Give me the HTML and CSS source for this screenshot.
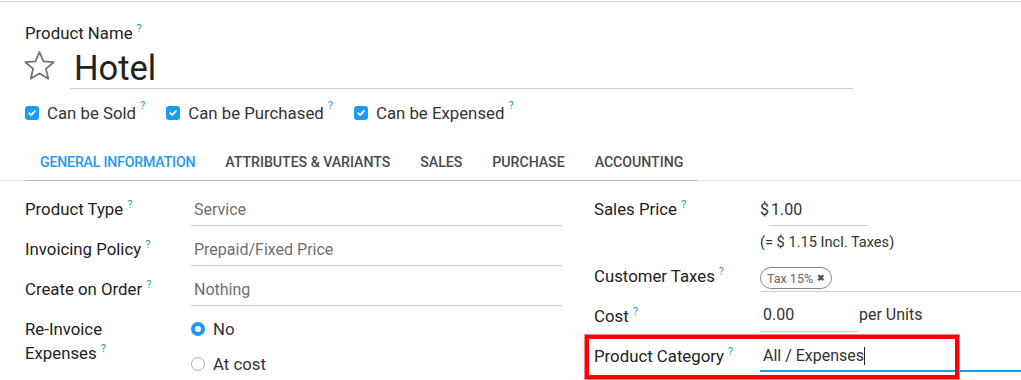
FILE: index.html
```html
<!DOCTYPE html>
<html>
<head>
<meta charset="utf-8">
<link rel="stylesheet" href="styles.css">
</head>
<body>
<div class="topline"></div>
<div class="sheet">
  <div class="title">
    <div class="name-label">Product Name<sup class="tip">?</sup></div>
    <div class="name-row">
      <svg class="star" width="33" height="31" viewBox="0 0 33 31">
        <path d="M16.5 2 L20.5 11.4 L30.6 12.2 L22.9 18.9 L25.3 28.8 L16.5 23.5 L7.7 28.8 L10.1 18.9 L2.4 12.2 L12.5 11.4 Z" fill="none" stroke="#737373" stroke-width="1.8" stroke-linejoin="round"/>
      </svg>
      <div class="name-input">Hotel</div>
    </div>
    <div class="checks">
      <label class="check"><span class="box"><svg width="10" height="10" viewBox="0 0 10 10"><path d="M2.2 5.2 L4.2 7.1 L7.9 3" fill="none" stroke="#fff" stroke-width="1.8" stroke-linecap="round" stroke-linejoin="round"/></svg></span>Can be Sold<sup class="tip">?</sup></label>
      <label class="check"><span class="box"><svg width="10" height="10" viewBox="0 0 10 10"><path d="M2.2 5.2 L4.2 7.1 L7.9 3" fill="none" stroke="#fff" stroke-width="1.8" stroke-linecap="round" stroke-linejoin="round"/></svg></span>Can be Purchased<sup class="tip">?</sup></label>
      <label class="check"><span class="box"><svg width="10" height="10" viewBox="0 0 10 10"><path d="M2.2 5.2 L4.2 7.1 L7.9 3" fill="none" stroke="#fff" stroke-width="1.8" stroke-linecap="round" stroke-linejoin="round"/></svg></span>Can be Expensed<sup class="tip">?</sup></label>
    </div>
  </div>

  <div class="tabs-wrap">
    <ul class="tabs">
      <li class="tab active">General Information</li>
      <li class="tab">Attributes &amp; Variants</li>
      <li class="tab">Sales</li>
      <li class="tab">Purchase</li>
      <li class="tab">Accounting</li>
    </ul>
  </div>

  <div class="groups">
    <div class="group">
      <div class="row">
        <div class="label">Product Type<sup class="tip">?</sup></div>
        <div class="field select">Service</div>
      </div>
      <div class="row">
        <div class="label">Invoicing Policy<sup class="tip">?</sup></div>
        <div class="field select">Prepaid/Fixed Price</div>
      </div>
      <div class="row">
        <div class="label">Create on Order<sup class="tip">?</sup></div>
        <div class="field select">Nothing</div>
      </div>
      <div class="row tall">
        <div class="label two-line">Re-Invoice<br>Expenses<sup class="tip">?</sup></div>
        <div class="radios">
          <div class="radio-item"><span class="radio on"></span>No</div>
          <div class="radio-item"><span class="radio"></span>At cost</div>
        </div>
      </div>
    </div>

    <div class="group right">
      <div class="row price-row">
        <div class="label">Sales Price<sup class="tip">?</sup></div>
        <div class="price-field">
          <div class="price-line"><span class="cur">$</span><span class="field money">1.00</span></div>
          <div class="incl">(= $ 1.15 Incl. Taxes)</div>
        </div>
      </div>
      <div class="row taxes-row">
        <div class="label">Customer Taxes<sup class="tip">?</sup></div>
        <div class="tags-field"><span class="tag">Tax 15% <span class="x">&#10006;</span></span></div>
      </div>
      <div class="row cost-row">
        <div class="label">Cost<sup class="tip">?</sup></div>
        <div class="cost-line"><span class="field cost">0.00</span><span class="unit">per Units</span></div>
      </div>
      <div class="row cat-row">
        <div class="label">Product Category<sup class="tip">?</sup></div>
        <div class="field focused">All / Expenses<span class="caret"></span></div>
      </div>
    </div>
  </div>
</div>
<div class="highlight"></div>
</body>
</html>
```

FILE: styles.css
```css
html, body {
  margin: 0;
  padding: 0;
  overflow: hidden;
  background: #fff;
}
body {
  font-family: Roboto, "Noto Sans", sans-serif;
  color: #2b2b2b;
  font-size: 16.8px;
  width: 1021px;
  height: 380px;
  position: relative;
}
.topline {
  height: 1px;
  border-bottom: 1px solid #e0e0e0;
}
.tip {
  color: #1f9bd7;
  font-size: 11px;
  margin-left: 4px;
  vertical-align: 0;
  position: relative;
  top: -7px;
  line-height: 0;
}
.title {
  padding-left: 25px;
}
.name-label {
  margin-top: 21px;
  line-height: 20px;
  color: #222;
}
.name-row {
  display: flex;
  align-items: flex-start;
  margin-top: 5px;
}
.star {
  margin-left: -2px;
  margin-top: 2px;
  flex: none;
}
.name-input {
  margin-left: 14px;
  width: 779px;
  padding-left: 4px;
  height: 40px;
  line-height: 40px;
  font-size: 34.5px;
  color: #222;
  border-bottom: 1px solid #cfcfcf;
}
.checks {
  display: flex;
  margin-top: 14px;
  line-height: 20px;
  color: #333;
}
.check {
  display: flex;
  align-items: center;
  margin-right: 21px;
}
.box {
  width: 14px;
  height: 14px;
  border-radius: 3px;
  background: #1a9cf0;
  display: inline-flex;
  align-items: center;
  justify-content: center;
  margin-right: 8px;
}
.box svg { display: block; }

.tabs-wrap {
  margin-top: 21px;
  padding-left: 25px;
  border-bottom: 1px solid #e4e4e4;
}
.tabs {
  list-style: none;
  margin: 0 0 -1px 0;
  padding: 0;
  display: inline-flex;
  border-bottom: 1px solid #b8b8b8;
}
.tab {
  padding: 8px 15px 8px 15px;
  line-height: 20px;
  font-size: 14.2px;
  font-weight: 500;
  letter-spacing: -0.05px;
  text-transform: uppercase;
  color: #4a4a4a;
}
.tab.active {
  color: #1f9bf0;
  letter-spacing: -0.22px;
}

.groups {
  display: flex;
  margin-top: 8px;
  padding-left: 25px;
  gap: 32px;
}
.group {
  width: 537px;
  flex: none;
  display: flex;
  flex-direction: column;
}
.row {
  display: grid;
  grid-template-columns: 166px 1fr;
  height: 40px;
}
.row.tall { height: 80px; }
.label {
  padding-top: 10px;
  line-height: 20px;
  color: #222;
}
.label.two-line {
  padding-top: 8px;
  line-height: 24px;
}
.field {
  padding: 11px 0 5px 3px;
  line-height: 20px;
  height: 20px;
  border-bottom: 1px solid #cdcdcd;
  font-size: 16px;
}
.select { color: #6f6f6f; }

.radios {
  padding-top: 10px;
}
.radio-item {
  display: flex;
  align-items: center;
  line-height: 20px;
  height: 20px;
  color: #333;
}
.radio-item + .radio-item { margin-top: 15px; }
.radio {
  width: 14px;
  height: 14px;
  border-radius: 50%;
  border: 1px solid #adadad;
  box-sizing: border-box;
  margin-right: 8px;
  background: #fff;
}
.radio.on {
  border: 4px solid #1a9cf0;
}

/* right group */
.price-row { height: 67px; }
.price-line {
  display: flex;
  align-items: flex-start;
}
.cur {
  padding-top: 11px;
  line-height: 20px;
  width: 9px;
  font-size: 16px;
  color: #333;
}
.money {
  width: 97px;
  color: #333;
  padding-left: 2px;
}
.incl {
  margin-top: 6px;
  line-height: 20px;
  font-size: 14.6px;
  color: #333;
}
.taxes-row { height: 40px; }
.tags-field {
  border-bottom: 1px solid #cdcdcd;
  height: 34px;
  padding-top: 1px;
  width: 460px;
}
.tag {
  display: inline-flex;
  align-items: center;
  height: 22px;
  box-sizing: border-box;
  margin-top: 10px;
  border: 1px solid #888;
  border-radius: 11px;
  padding: 0 6px;
  font-size: 12.5px;
  color: #666;
  gap: 4px;
}
.x {
  font-size: 9px;
  color: #555;
  font-weight: bold;
}
.cost-row { height: 40px; }
.cost-line { display: flex; align-items: flex-start; }
.cost {
  width: 96px;
  padding-top: 9px;
  padding-bottom: 6px;
  color: #333;
}
.unit {
  padding-top: 9px;
  line-height: 20px;
  font-size: 16px;
  color: #333;
}
.cat-row .field.focused {
  border-bottom: 2px solid #1a9cf0;
  padding: 10px 0 4px 3px;
  color: #333;
  width: 460px;
}
.caret {
  display: inline-block;
  width: 1px;
  height: 18px;
  background: #222;
  vertical-align: -4px;
}
.highlight {
  position: absolute;
  left: 585px;
  top: 335px;
  width: 366px;
  height: 36px;
  border: 4px solid #ff0000;
  box-shadow: 0 0 0 1px #ff8080;
}
```
